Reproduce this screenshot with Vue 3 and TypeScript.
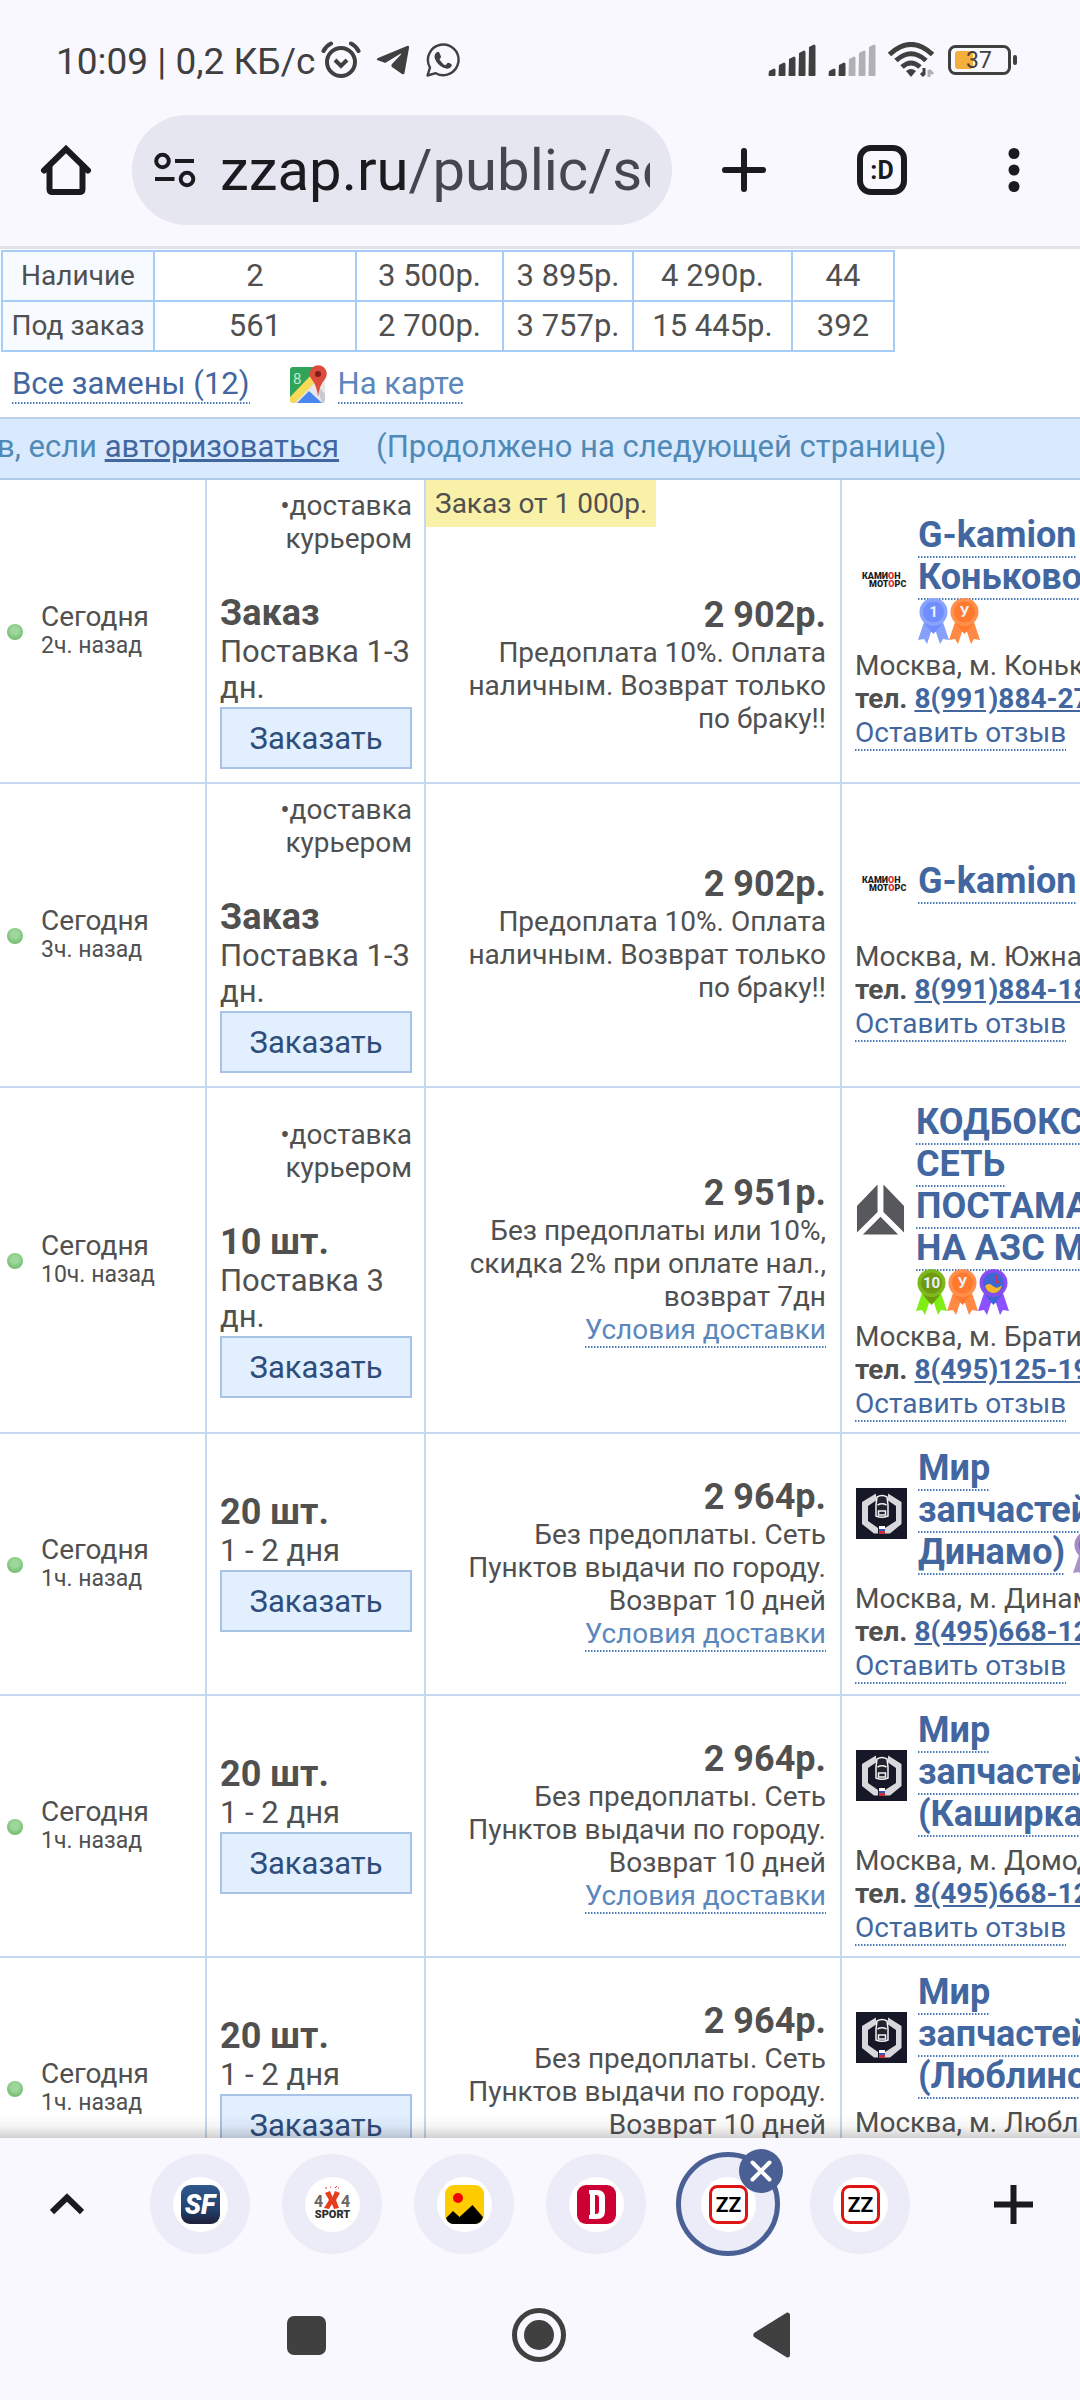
<script setup lang="ts">
interface Offer {
  ago: string
  courier?: boolean
  stock: string
  term: string[]
  minOrder?: string
  price: string
  terms: string[]
  shipping?: boolean
  logo: 'kamion' | 'codebox' | 'mir'
  name: string[]
  medals: string[]
  medalInline?: boolean
  address: string
  phone: string
}

const summary = [
  ['Наличие', '2', '3 500р.', '3 895р.', '4 290р.', '44'],
  ['Под заказ', '561', '2 700р.', '3 757р.', '15 445р.', '392'],
]

const kamionTerms = ['Предоплата 10%. Оплата', 'наличным. Возврат только', 'по браку!!']
const mirTerms = ['Без предоплаты. Сеть', 'Пунктов выдачи по городу.', 'Возврат 10 дней']

const offers: Offer[] = [
  {
    ago: '2ч. назад', courier: true, stock: 'Заказ', term: ['Поставка 1-3', 'дн.'],
    minOrder: 'Заказ от 1 000р.', price: '2 902р.', terms: kamionTerms,
    logo: 'kamion', name: ['G-kamion', 'Коньково'], medals: ['one', 'y'],
    address: 'Москва, м. Коньково', phone: '8(991)884-27',
  },
  {
    ago: '3ч. назад', courier: true, stock: 'Заказ', term: ['Поставка 1-3', 'дн.'],
    price: '2 902р.', terms: kamionTerms,
    logo: 'kamion', name: ['G-kamion'], medals: [],
    address: 'Москва, м. Южная', phone: '8(991)884-18',
  },
  {
    ago: '10ч. назад', courier: true, stock: '10 шт.', term: ['Поставка 3', 'дн.'],
    price: '2 951р.', terms: ['Без предоплаты или 10%,', 'скидка 2% при оплате нал.,', 'возврат 7дн'], shipping: true,
    logo: 'codebox', name: ['КОДБОКС', 'СЕТЬ', 'ПОСТАМАТОВ', 'НА АЗС МО'], medals: ['ten', 'y', 'sea'],
    address: 'Москва, м. Братиславская', phone: '8(495)125-19',
  },
  {
    ago: '1ч. назад', stock: '20 шт.', term: ['1 - 2 дня'],
    price: '2 964р.', terms: mirTerms, shipping: true,
    logo: 'mir', name: ['Мир', 'запчастей', 'Динамо)'], medals: ['violet'], medalInline: true,
    address: 'Москва, м. Динамо', phone: '8(495)668-12',
  },
  {
    ago: '1ч. назад', stock: '20 шт.', term: ['1 - 2 дня'],
    price: '2 964р.', terms: mirTerms, shipping: true,
    logo: 'mir', name: ['Мир', 'запчастей', '(Каширка)'], medals: [],
    address: 'Москва, м. Домодедовская', phone: '8(495)668-12',
  },
  {
    ago: '1ч. назад', stock: '20 шт.', term: ['1 - 2 дня'],
    price: '2 964р.', terms: mirTerms, shipping: true,
    logo: 'mir', name: ['Мир', 'запчастей', '(Люблино)'], medals: [],
    address: 'Москва, м. Люблино', phone: '8(495)668-12',
  },
]

const medalStyle: Record<string, { disc: string; ring: string; tail: string; text: string }> = {
  one: { disc: '#6f8dff', ring: '#8ba4fb', tail: '#86a0fa', text: '1' },
  y: { disc: '#ff7a2e', ring: '#ff8f4d', tail: '#ff8a45', text: 'У' },
  ten: { disc: '#6f9a10', ring: '#7fb81c', tail: '#7fee14', text: '10' },
  sea: { disc: '#3f66d6', ring: '#8a4df2', tail: '#8d52ff', text: '' },
  violet: { disc: '#8a6fb5', ring: '#a48cc6', tail: '#a994ca', text: '' },
}

const tabs = ['sf', 'sport', 'photo', 'd', 'zz', 'zz']
const tabNames = ['SF', '4x4 Sport', 'Картинки', 'D', 'ZZap', 'ZZap']
const activeTab = 4
const bars = [8, 14, 20, 26, 32]
</script>

<template>
  <div class="screen">
    <header class="chrome">
      <div class="status">
        <span class="clock">10:09 | 0,2 КБ/с</span>
        <svg class="alarm" width="40" height="38" viewBox="0 0 40 38" fill="none" stroke="#404040">
          <circle cx="20" cy="21" r="14" stroke-width="4" />
          <path d="M14 19l6 6 6-6" stroke-width="4" />
          <path d="M2.500 10Q5 5 10 2.500M37.500 10Q35 5 30 2.500" stroke-width="4" stroke-linecap="round" />
        </svg>
        <svg class="plane" width="34" height="30" viewBox="0 0 34 30"><path d="M1 15Q0 14 2 13L31 1Q33.500 0 33 3L28.500 28Q28 30 26 29L16 22Q14.500 20.500 16 19L25 9.500Q26 8 24 9L10 17.500Q9 18 8 17.500Z" fill="#404040" /></svg>
        <svg class="wa" width="34" height="34" viewBox="0 0 34 34" fill="none">
          <path d="M1.500 32.500L4 24.500A15.300 15.300 0 1 1 9.800 30.200Z" stroke="#404040" stroke-width="2.400" stroke-linejoin="round" />
          <path d="M9.500 10.500Q12 7.500 13.500 10L15 13.500Q15.300 14.800 13.500 16.300Q16 21 19.500 22.300L21.500 20Q22.200 19.300 25.500 21.300Q26.500 22 25 24Q22 27 17 24.500Q11.500 22 8.800 15.500Q8 12.500 9.500 10.500Z" fill="#404040" />
        </svg>
        <span class="spacer"></span>
        <svg v-for="sim in 2" :key="sim" class="signal" width="48" height="32" viewBox="0 0 48 32">
          <path
            v-for="(h, i) in bars" :key="i"
            :d="`M${i * 10 + 1} ${32 - h + 3}l5-2.500q1.500 0 1.500 1.500V31q0 1-1 1H${i * 10 + 1.500}q-1 0-1-1Z`"
            :fill="sim === 2 && i > 1 ? '#b1b0b5' : '#404040'"
          />
        </svg>
        <svg class="wifi" width="46" height="36" viewBox="0 0 46 36" fill="none">
          <g stroke="#404040" stroke-width="5"><path d="M1.500 12.500Q23-7.500 44.500 12.500" /><path d="M8 18.500Q23 5 38 18.500" /><path d="M14 25Q23 17 32 25" /></g>
          <path d="M18 29Q23 25 28 29L23 35Z" fill="#404040" />
          <path d="M36 26v7M33 31l3 3" stroke="#404040" stroke-width="3" /><path d="M41 35v-7M41 28l4 4" stroke="#b1b0b5" stroke-width="3" />
        </svg>
        <svg class="battery" width="70" height="30" viewBox="0 0 70 30">
          <rect x="1.500" y="1.500" width="60" height="27" rx="6" fill="none" stroke="#404040" stroke-width="3" />
          <rect x="7" y="6" width="18" height="18" rx="3" fill="#f4ae3b" />
          <rect x="65" y="10" width="4" height="10" rx="2" fill="#404040" />
          <text x="31" y="23" font-family="Roboto, sans-serif" font-size="23" text-anchor="middle" fill="#404040">37</text>
        </svg>
      </div>

      <nav class="toolbar">
        <button class="icon home" aria-label="Домой">
          <svg width="52" height="52" viewBox="0 0 52 52" fill="none" stroke="#1b1b1f" stroke-width="6" stroke-linecap="round"><path d="M4 26.500L26 5L48 26.500" stroke-linejoin="miter" /><path d="M9.500 23V45Q9.500 48 12.500 48H39.500Q42.500 48 42.500 45V23" /></svg>
        </button>
        <div class="omnibox">
          <button class="icon tune" aria-label="Сведения о сайте">
            <svg width="42" height="36" viewBox="0 0 42 36" fill="none" stroke="#1b1b1f" stroke-width="4"><circle cx="8.500" cy="9" r="6.300" /><path d="M21 9H40M1 27H20.500" /><circle cx="33" cy="27" r="6.300" /></svg>
          </button>
          <button class="url"><b>zzap.ru</b>/public/search</button>
        </div>
        <button class="icon" aria-label="Новая вкладка">
          <svg width="44" height="46" viewBox="0 0 44 46" stroke="#1b1b1f" stroke-width="6" stroke-linecap="round"><path d="M3 23H41M22 4V42" /></svg>
        </button>
        <button class="icon" aria-label="Вкладки">
          <svg width="50" height="50" viewBox="0 0 50 50"><rect x="3" y="3" width="44" height="44" rx="11" fill="none" stroke="#1b1b1f" stroke-width="6" /><text x="25" y="34" text-anchor="middle" font-family="Roboto, sans-serif" font-weight="700" font-size="25" fill="#1b1b1f">:D</text></svg>
        </button>
        <button class="icon" aria-label="Меню">
          <svg width="14" height="46" viewBox="0 0 14 46" fill="#1b1b1f"><circle cx="7" cy="6.500" r="5.500" /><circle cx="7" cy="23" r="5.500" /><circle cx="7" cy="39.500" r="5.500" /></svg>
        </button>
      </nav>
    </header>

    <main class="page">
      <table class="summary">
        <colgroup><col class="s1"><col class="s2"><col class="s3"><col class="s4"><col class="s5"><col class="s6"></colgroup>
        <tbody>
          <tr v-for="row in summary" :key="row[0]">
            <th scope="row">{{ row[0] }}</th>
            <td v-for="(c, i) in row.slice(1)" :key="i">{{ c }}</td>
          </tr>
        </tbody>
      </table>

      <div class="links">
        <a href="#" class="dotted">Все замены (12)</a>
        <svg class="map" width="38" height="40" viewBox="0 0 38 40">
          <rect x="1" y="3" width="35" height="36" rx="3" fill="#e8e8ea" />
          <path d="M4 3H30L1 34V6Q1 3 4 3Z" fill="#31a45c" />
          <path d="M30 3L36 8L6 39H4Q1 39 1 36V33Z" fill="#f7da58" />
          <path d="M20 27L33 39H8Z" fill="#4a86ee" />
          <path d="M27 20L36 30V36Q36 39 33 39Z" fill="#c9c9cf" />
          <text x="4" y="20" font-family="Roboto, sans-serif" font-size="15" fill="#bfe8cc">8</text>
          <path d="M29 33Q28 22 22.500 15A8.500 8.500 0 1 1 36 15Q30 22 29 33Z" fill="#dd4b3e" />
          <circle cx="29" cy="10" r="3" fill="#7c1f1a" />
        </svg>
        <a href="#" class="dotted light">На карте</a>
      </div>

      <div class="notice">в, если <a href="#">авторизоваться</a><span>(Продолжено на следующей странице)</span></div>

      <table class="offers">
        <colgroup><col class="c-date"><col class="c-stock"><col class="c-price"><col></colgroup>
        <tbody>
          <tr v-for="(o, i) in offers" :key="i">
            <td class="date">
              <div class="when">
                <i class="dot"></i>
                <div>Сегодня<small>{{ o.ago }}</small></div>
              </div>
            </td>
            <td class="stock">
              <div v-if="o.courier" class="courier">•доставка<br>курьером</div>
              <strong class="big">{{ o.stock }}</strong>
              <div v-for="t in o.term" :key="t" class="term">{{ t }}</div>
              <button class="order">Заказать</button>
            </td>
            <td class="price" :class="{ badged: o.minOrder }">
              <span v-if="o.minOrder" class="badge">{{ o.minOrder }}</span>
              <strong class="big">{{ o.price }}</strong>
              <div v-for="t in o.terms" :key="t" class="line">{{ t }}</div>
              <div v-if="o.shipping" class="line"><a href="#" class="dotted light">Условия доставки</a></div>
            </td>
            <td class="shop">
              <div class="head" :class="o.logo">
                <svg v-if="o.logo === 'kamion'" class="logo" width="51" height="100" viewBox="0 0 51 100" font-family="Roboto, sans-serif" font-weight="900" font-size="9" fill="#1c1c1c">
                  <text x="6" y="49">КАМИ<tspan fill="#e0242c">О</tspan>Н</text>
                  <text x="13" y="57">МОТ<tspan fill="#e0242c">О</tspan>РС</text>
                </svg>
                <svg v-else-if="o.logo === 'codebox'" class="logo" width="49" height="51" viewBox="1 0 50 51" fill="#57585b">
                  <path d="M23 0V28L2 49V22ZM29 0V28L50 49V22Z" /><path d="M26 33L44 51H8Z" />
                </svg>
                <svg v-else class="logo" width="51" height="51" viewBox="0 0 51 51">
                  <rect width="51" height="51" fill="#171827" />
                  <path d="M20 5.500L6 14V36L18 45.500H22V40L12 33V18L20 12.500ZM32 5.500L45.500 14V36L34 45.500H29V40L40 33V18L32 12.500Z" fill="#d8d8dc" />
                  <path d="M20 8Q26 5 32 8V28Q26 31 20 28Z" fill="#22232f" />
                  <path d="M21 9Q26 6 31 9L32 17V28Q26 30.500 20 28V17Z" fill="none" stroke="#f2f2f4" stroke-width="1.500" /><path d="M21.500 17Q26 14.500 30.500 17M22.500 23H29.500V27H22.500Z" stroke="#f2f2f4" stroke-width="1.500" fill="none" />
                  <rect x="23" y="38" width="6" height="3" fill="#fff" /><rect x="23" y="41" width="6" height="2" fill="#3952b8" /><rect x="23" y="43" width="6" height="3" fill="#c6303a" />
                </svg>
                <div class="name">
                  <div v-for="(n, k) in o.name" :key="n" class="name-line">
                    <a href="#" class="dotted">{{ n }}</a>
                    <svg v-if="o.medalInline && k === o.name.length - 1" class="medal gap" width="31" height="46" viewBox="0 0 31 46">
                      <path d="M6 24L0 42L6 41L9 46L13 34H18L22 46L25 41L31 42L25 24Z" :fill="medalStyle.violet.tail" />
                      <circle cx="15.500" cy="14" r="14" :fill="medalStyle.violet.ring" /><circle cx="15.500" cy="14" r="10" :fill="medalStyle.violet.disc" />
                    </svg>
                  </div>
                  <div v-if="o.medals.length && !o.medalInline" class="medals">
                    <svg v-for="m in o.medals" :key="m" class="medal" width="31" height="46" viewBox="0 0 31 46">
                      <path d="M6 24L0 42L6 41L9 46L13 34H18L22 46L25 41L31 42L25 24Z" :fill="medalStyle[m].tail" />
                      <path d="M7 26L15.500 36L24 26Z" :fill="medalStyle[m].disc" />
                      <circle cx="15.500" cy="14" r="14" :fill="medalStyle[m].ring" /><circle cx="15.500" cy="14" r="10.500" :fill="medalStyle[m].disc" />
                      <path v-if="m === 'sea'" d="M7 17Q11 13 15 17T24 16Q22 24 15.500 24T7 17Z" fill="#f7b52c" /><path v-if="m === 'sea'" d="M18 6V13H22" stroke="#c23a55" stroke-width="2" fill="none" />
                      <text v-if="medalStyle[m].text" x="15.500" y="19" text-anchor="middle" font-family="Roboto, sans-serif" font-size="15" font-weight="700" fill="#eef0ff">{{ medalStyle[m].text }}</text>
                    </svg>
                  </div>
                </div>
              </div>
              <div class="line">{{ o.address }}</div>
              <div class="line phone">тел. <a href="#">{{ o.phone }}</a></div>
              <div class="line"><a href="#" class="dotted">Оставить отзыв</a></div>
            </td>
          </tr>
        </tbody>
      </table>
    </main>

    <footer class="chrome">
      <div class="strip">
        <button class="icon edge" aria-label="Развернуть"><svg width="34" height="22" viewBox="0 0 34 22" fill="none" stroke="#1b1b1f" stroke-width="6"><path d="M2 19L17 4.500L32 19" /></svg></button>
        <div class="tabs">
          <div v-for="(t, i) in tabs" :key="i" class="slot">
            <button class="tab" :class="{ active: i === activeTab }" :aria-label="tabNames[i]">
              <span class="disc">
                <svg v-if="t === 'sf'" width="39" height="39" viewBox="0 0 39 39">
                  <defs><linearGradient id="sf" x2="0" y2="1"><stop stop-color="#30588c" /><stop offset=".6" stop-color="#234271" /><stop offset="1" stop-color="#1f1f38" /></linearGradient></defs>
                  <rect width="39" height="39" rx="9" fill="url(#sf)" /><text x="19" y="29" text-anchor="middle" font-family="Roboto, sans-serif" font-weight="900" font-style="italic" font-size="27" fill="#fff">SF</text>
                </svg>
                <svg v-else-if="t === 'sport'" width="39" height="39" viewBox="0 0 39 39" font-family="Roboto, sans-serif" font-weight="700">
                  <text x="1" y="22" font-size="16" fill="#6b6663">4</text><text x="28" y="22" font-size="16" fill="#6b6663">4</text>
                  <path d="M12 8L17 6L19.500 12L22 6L27 8L23 15L26 23L21 24L19 19L16 24L11 23L16 15Z" fill="#e73c1c" /><path d="M12 3h2M17 2h1M22 3l2-2M25 3h1" stroke="#e73c1c" />
                  <text x="19.500" y="33" text-anchor="middle" font-size="11" font-weight="900" fill="#2e2c2c">SPORT</text>
                </svg>
                <svg v-else-if="t === 'photo'" width="39" height="39" viewBox="0 0 39 39">
                  <rect width="39" height="39" rx="9" fill="#fc0" /><circle cx="13" cy="13" r="5" fill="#f50000" /><path d="M1 33L8 26L14.500 32L27.500 20L38 32Q36 39 30 39H9Q3 39 1 33Z" fill="#000" />
                </svg>
                <svg v-else-if="t === 'd'" width="39" height="39" viewBox="0 0 39 39">
                  <rect width="39" height="39" rx="9" fill="#cc0033" /><path d="M12 5H20Q28 5 28 13V26Q28 34 20 34H12V30H13V9H12ZM18 10V29H19Q22 29 22 26V13Q22 10 19 10Z" fill="#fff" fill-rule="evenodd" />
                </svg>
                <svg v-else width="39" height="39" viewBox="0 0 39 39">
                  <rect x="1.500" y="1.500" width="36" height="36" rx="7" fill="#fff" stroke="#e01414" stroke-width="3" /><text x="19.500" y="27" text-anchor="middle" font-family="Roboto, sans-serif" font-weight="700" font-size="21" fill="#000">ZZ</text>
                </svg>
              </span>
            </button>
            <button v-if="i === activeTab" class="close" aria-label="Закрыть вкладку"><svg width="22" height="22" viewBox="0 0 22 22" stroke="#fff" stroke-width="4" stroke-linecap="round"><path d="M2.500 2.500L19.500 19.500M19.500 2.500L2.500 19.500" /></svg></button>
          </div>
        </div>
        <button class="icon edge" aria-label="Новая вкладка в группе"><svg width="39" height="39" viewBox="0 0 39 39" stroke="#1b1b1f" stroke-width="6"><path d="M0 19.500H39M19.500 0V39" /></svg></button>
      </div>
      <div class="sysnav">
        <button class="icon" aria-label="Недавние"><svg width="39" height="39" viewBox="0 0 39 39"><rect width="39" height="39" rx="7" fill="#404040" /></svg></button>
        <button class="icon" aria-label="Главный экран"><svg width="54" height="54" viewBox="0 0 54 54"><circle cx="27" cy="27" r="24.500" fill="none" stroke="#404040" stroke-width="5" /><circle cx="27" cy="27" r="15" fill="#404040" /></svg></button>
        <button class="icon" aria-label="Назад"><svg width="38" height="46" viewBox="0 0 38 46"><path d="M1 21L34 .5Q37 0 37 3V43Q37 46 34 45.500L1 25Q-.5 23 1 21Z" fill="#404040" /></svg></button>
      </div>
    </footer>
  </div>
</template>

<style>
body {
  margin: 0;
}
</style>

<style scoped>
.screen {
  display: flex;
  flex-direction: column;
  height: 100vh;
  overflow: hidden;
  background: #fff;
  color: #505050;
  font-family: Roboto, sans-serif;
}
svg {
  display: block;
  flex: none;
}
button {
  font-family: inherit;
  margin: 0;
  padding: 0;
}
.chrome {
  flex: none;
  background: #f9f8fe;
}
header.chrome {
  border-bottom: 3px solid #e1e1e9;
  padding-bottom: 21px;
}
.icon {
  display: flex;
  align-items: center;
  justify-content: center;
  border: 0;
  background: none;
}

.status {
  display: flex;
  align-items: center;
  height: 40px;
  padding: 40px 62px 35px 56px;
}
.clock {
  padding-top: 4px;
  font-size: 37px;
  line-height: 40px;
  color: #404040;
  white-space: nowrap;
}
.alarm { margin-left: 6px; }
.plane { margin-left: 15px; }
.wa { margin-left: 16px; }
.spacer { flex: 1; }
.signal { margin-right: 12px; }
.battery { margin-left: 14px; }

.toolbar {
  display: flex;
  align-items: center;
  height: 110px;
}
.toolbar > .icon {
  width: 132px;
  height: 110px;
}
.toolbar .omnibox + .icon {
  width: 144px;
}
.omnibox {
  flex: 1;
  min-width: 0;
  height: 110px;
  display: flex;
  align-items: center;
  gap: 24px;
  padding: 0 22px;
  border-radius: 55px;
  box-sizing: border-box;
  background: #e6e6f0;
}
.url {
  flex: 1;
  min-width: 0;
  overflow: hidden;
  border: 0;
  background: none;
  text-align: left;
  white-space: nowrap;
  font-size: 58px;
  line-height: 72px;
  color: #45464f;
}
.url b {
  font-weight: 400;
  color: #1b1b1f;
}

.page {
  position: relative;
  flex: 1;
  min-height: 0;
  overflow: hidden;
}
.page::after {
  content: '';
  position: absolute;
  left: 0;
  right: 0;
  bottom: 0;
  height: 24px;
  background: linear-gradient(rgba(0, 0, 0, 0), rgba(0, 0, 0, 0.04) 50%, rgba(0, 0, 0, 0.18));
}
a {
  color: #4267a0;
}
a.dotted {
  padding-bottom: 2px;
  text-decoration: none;
  background: linear-gradient(90deg, #4a7ab5 1px, #a9c1de 1px, #a9c1de 2px, transparent 2px) left bottom / 3px 2px repeat-x;
}
a.light {
  color: #5b87bd;
}

.summary {
  table-layout: fixed;
  border-collapse: collapse;
  width: 893px;
  margin: 1px 0 0 1px;
  font-size: 31px;
  line-height: 36px;
}
.s1 { width: 152px; }
.s2 { width: 202px; }
.s3 { width: 147px; }
.s4 { width: 130px; }
.s5 { width: 159px; }
.s6 { width: 102px; }
.summary th,
.summary td {
  height: 47px;
  padding: 0 0 1px;
  border: 2px solid #a5cdf5;
  text-align: center;
  white-space: nowrap;
}
.summary th {
  font-size: 28px;
  font-weight: 400;
  background: #f7faff;
}
.links {
  display: flex;
  align-items: center;
  padding: 12px 12px 13px;
  font-size: 31px;
  line-height: 37px;
}
.map {
  margin: 0 11px 0 39px;
}
.notice {
  padding: 10px 0 13px;
  border-top: 2px solid #bcd2ea;
  border-bottom: 2px solid #b0cbe9;
  background: #d9e9fe;
  color: #5089b5;
  font-size: 31px;
  line-height: 36px;
  text-indent: -3px;
  white-space: nowrap;
}
.notice span {
  margin-left: 37px;
}

.offers {
  table-layout: fixed;
  width: 100%;
  border-collapse: separate;
  border-spacing: 0;
  font-size: 28px;
  line-height: 33px;
}
.c-date { width: 207px; }
.c-stock { width: 219px; }
.c-price { width: 416px; }
.offers td {
  position: relative;
  padding: 10px 14px 12px;
  border-right: 2px solid #c5d9f0;
  border-bottom: 2px solid #c5d9f0;
  vertical-align: middle;
  white-space: nowrap;
}
.offers td.date {
  padding: 12px 0 10px 7px;
}
.offers td.stock {
  padding: 9px 12px 13px 13px;
}
.when {
  display: flex;
  align-items: center;
  gap: 18px;
  line-height: 28px;
}
.when small {
  display: block;
  font-size: 23px;
  line-height: 30px;
}
.dot {
  width: 16px;
  height: 16px;
  border-radius: 50%;
  background: radial-gradient(circle at 50% 40%, #9ed69b 0 30%, #7ec57b 60%, #6dac6b);
}
.courier {
  margin-bottom: 38px;
  text-align: right;
}
.big {
  display: block;
  font-size: 36px;
  line-height: 41px;
}
.term {
  font-size: 31px;
  line-height: 36px;
}
.order {
  display: block;
  width: 100%;
  height: 62px;
  margin-top: 1px;
  border: 2px solid #a9c3e6;
  background: #e1efff;
  color: #2f4d7b;
  font-size: 31px;
}
.price {
  text-align: right;
}
.offers td.badged {
  padding-top: 80px;
}
.badge {
  position: absolute;
  left: 0;
  top: 0;
  padding: 7px 9px;
  background: #faf1a9;
}
.offers td.shop {
  padding: 13px 0 12px 13px;
  border-right: 0;
  overflow: hidden;
}
.head {
  display: flex;
  align-items: center;
  gap: 11px;
  margin: 0 0 3px 1px;
}
.kamion {
  min-height: 106px;
}
.name {
  padding-bottom: 6px;
  font-size: 36px;
  line-height: 42px;
  font-weight: 700;
}
.name-line,
.medals {
  display: flex;
  height: 42px;
}
.name-line a {
  height: 42px;
}
.medal.gap {
  margin-left: 8px;
}
.phone {
  line-height: 34px;
  font-weight: 700;
}

.strip {
  display: flex;
  align-items: center;
  height: 132px;
  padding-bottom: 48px;
}
.edge {
  width: 134px;
  height: 132px;
}
.tabs {
  flex: 1;
  display: flex;
}
.slot {
  position: relative;
  width: 132px;
  height: 132px;
  display: flex;
  align-items: center;
  justify-content: center;
}
.tab {
  display: flex;
  align-items: center;
  justify-content: center;
  width: 100px;
  height: 100px;
  border: 0;
  border-radius: 50%;
  background: #ececf8;
}
.tab.active {
  width: 104px;
  height: 104px;
  border: 5px solid #4a6094;
}
.disc {
  display: flex;
  align-items: center;
  justify-content: center;
  width: 55px;
  height: 55px;
  border-radius: 50%;
  background: #fff;
}
.close {
  position: absolute;
  right: 11px;
  top: 11px;
  display: flex;
  align-items: center;
  justify-content: center;
  width: 44px;
  height: 44px;
  border: 0;
  border-radius: 50%;
  background: #4a6094;
}
.sysnav {
  display: flex;
  justify-content: center;
  height: 82px;
  padding-right: 2px;
}
.sysnav .icon {
  width: 233px;
  height: 34px;
}
</style>
